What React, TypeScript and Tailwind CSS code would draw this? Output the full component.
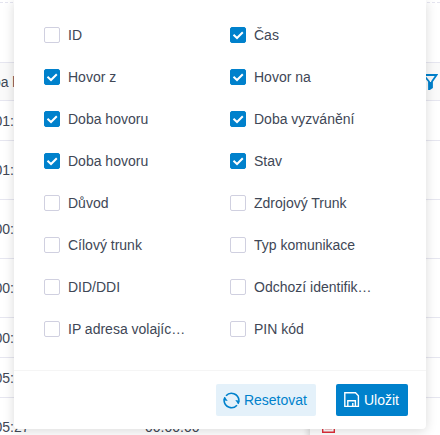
import React, { useState } from "react";

interface Column {
  id: string;
  label: string;
  visible: boolean;
}

interface CallRow {
  duration: string;
  ringing: string;
  tall?: boolean;
}

const defaultColumns: Column[] = [
  { id: "id", label: "ID", visible: false },
  { id: "time", label: "Čas", visible: true },
  { id: "from", label: "Hovor z", visible: true },
  { id: "to", label: "Hovor na", visible: true },
  { id: "duration", label: "Doba hovoru", visible: true },
  { id: "ringing", label: "Doba vyzvánění", visible: true },
  { id: "talk", label: "Doba hovoru", visible: true },
  { id: "status", label: "Stav", visible: true },
  { id: "reason", label: "Důvod", visible: false },
  { id: "source-trunk", label: "Zdrojový Trunk", visible: false },
  { id: "target-trunk", label: "Cílový trunk", visible: false },
  { id: "type", label: "Typ komunikace", visible: false },
  { id: "did", label: "DID/DDI", visible: false },
  { id: "outbound", label: "Odchozí identifikace", visible: false },
  { id: "ip", label: "IP adresa volajícího", visible: false },
  { id: "pin", label: "PIN kód", visible: false },
];

const calls: CallRow[] = [
  { duration: "00:01:12", ringing: "00:00:00" },
  { duration: "00:01:18", ringing: "00:00:00", tall: true },
  { duration: "00:00:41", ringing: "00:00:00", tall: true },
  { duration: "00:00:36", ringing: "00:00:00", tall: true },
  { duration: "00:00:19", ringing: "00:00:00" },
  { duration: "00:05:12", ringing: "00:00:00" },
  { duration: "00:05:27", ringing: "00:00:00", tall: true },
];

const FilterIcon = () => (
  <svg className="w-4 h-4" viewBox="0 0 16 16" fill="none">
    <path d="M1.5 1H14.5L10 7.5V13.5L7 15.5V7.5Z" stroke="#0081cc" strokeWidth="1.8" />
    <path d="M7 8H10V13.5L7 15.5Z" fill="#0081cc" />
  </svg>
);

const ResetIcon = () => (
  <svg className="w-[17px] h-[17px] shrink-0" viewBox="0 0 18 18" fill="none">
    <path
      d="M3.2 4A7.8 7.8 0 0 1 16.8 8.6M14.8 14A7.8 7.8 0 0 1 1.2 9.4"
      stroke="#0081cc"
      strokeWidth="1.7"
    />
    <path d="M1.2 9.4A7.8 7.8 0 0 1 2 5.6M16.8 8.6A7.8 7.8 0 0 1 16 12.4" stroke="#0081cc" strokeWidth="1.7" />
    <path d="M0.4 8.8L1.8 5L5 9.4ZM17.6 9.2L16.2 13L13 8.6Z" fill="#0081cc" />
  </svg>
);

const SaveIcon = () => (
  <svg className="w-4 h-4 shrink-0" viewBox="0 0 16 16" fill="none" stroke="white" strokeWidth="1.4">
    <path d="M0.8 0.8H11.5L14.4 3.7V14.4H0.8Z" />
    <path d="M3.8 14V8.7H11.4V14" />
    <path d="M8.8 11V14" />
  </svg>
);

const TrashIcon = () => (
  <svg className="w-[14px] h-[14px]" viewBox="0 0 14 14" fill="none" stroke="#e02f3a" strokeWidth="1.4">
    <path d="M0.7 0.7H12.3V12.3H0.7Z" />
    <path d="M3 8.5H10M5 3.5V9M8 3.5V9" />
  </svg>
);

const CallTable = () => (
  <div className="h-screen overflow-hidden">
    <div className="h-[62px] pt-[2px]">
      <div className="border-t border-dashed border-[#e4e4ef]" />
    </div>
    <table className="-ml-[41px] w-[calc(100%+41px)] table-fixed border-collapse text-left whitespace-nowrap">
      <thead>
        <tr className="h-[38px] border-y border-[#e6e6f0] bg-[#fafafa]">
          <th className="w-[170px] px-4 font-normal">Doba hovoru</th>
          <th className="w-[181px] px-4 font-normal">Doba vyzvánění</th>
          <th className="px-3 font-normal">
            <button className="block ml-auto -mr-[10px]" aria-label="Filtr">
              <FilterIcon />
            </button>
          </th>
        </tr>
      </thead>
      <tbody>
        {calls.map((call, index) => (
          <tr
            key={index}
            className={`border-b border-[#e6e6f0] ${call.tall ? "h-[59px]" : "h-[40px]"}`}
          >
            <td className="px-4">{call.duration}</td>
            <td className="px-4">{call.ringing}</td>
            <td className="px-3 shadow-[-6px_0_6px_-4px_rgba(0,0,0,0.15)]">
              <button className="block" aria-label="Smazat">
                <TrashIcon />
              </button>
            </td>
          </tr>
        ))}
      </tbody>
    </table>
  </div>
);

interface ColumnOptionProps {
  column: Column;
  onToggle: (id: string) => void;
}

const ColumnOption: React.FC<ColumnOptionProps> = ({ column, onToggle }) => {
  return (
    <label className="flex items-center gap-2 h-4 cursor-pointer">
      <span className="relative w-4 h-4 shrink-0">
        <input
          type="checkbox"
          checked={column.visible}
          onChange={() => onToggle(column.id)}
          className="block w-4 h-4 appearance-none rounded-[2px] border border-[#d0d0e0] bg-white checked:border-[#0081cc] checked:bg-[#0081cc]"
        />
        {column.visible && (
          <svg className="absolute inset-0 pointer-events-none" viewBox="0 0 16 16" fill="none">
            <path d="M3.5 7.8L7 11L12.8 5.2" stroke="white" strokeWidth="2" />
          </svg>
        )}
      </span>
      <span className="w-[118px] leading-5 truncate">{column.label}</span>
    </label>
  );
};

const App: React.FC = () => {
  const [columns, setColumns] = useState<Column[]>(defaultColumns);

  const toggle = (id: string) => {
    setColumns((prev) => prev.map((c) => (c.id === id ? { ...c, visible: !c.visible } : c)));
  };

  return (
    <div className="relative overflow-hidden bg-white text-sm text-[#404756] font-['Liberation_Sans',Arial,sans-serif]">
      <CallTable />

      {/* Column picker */}
      <div
        role="dialog"
        aria-label="Sloupce"
        className="absolute top-0 inset-x-[14px] rounded-b-[4px] bg-white shadow-[0_2px_12px_rgba(0,0,0,0.15)]"
      >
        <div className="grid grid-cols-2 gap-y-[26px] pt-[27px] pb-[33px] pl-[30px] pr-[10px]">
          {columns.map((column) => (
            <ColumnOption key={column.id} column={column} onToggle={toggle} />
          ))}
        </div>

        <div className="flex justify-end gap-5 border-t border-[#f5f5f5] py-[13px] pr-[18px]">
          <button
            onClick={() => setColumns(defaultColumns)}
            className="flex items-center gap-1 h-8 pl-[7px] pr-[9px] rounded-[2px] bg-[#e4f1fa] text-[#0081cc]"
          >
            <ResetIcon />
            Resetovat
          </button>
          <button className="flex items-center gap-1 h-8 pl-2 pr-[9px] rounded-[2px] bg-[#0081cc] text-white">
            <SaveIcon />
            Uložit
          </button>
        </div>
      </div>
    </div>
  );
};

export default App;
